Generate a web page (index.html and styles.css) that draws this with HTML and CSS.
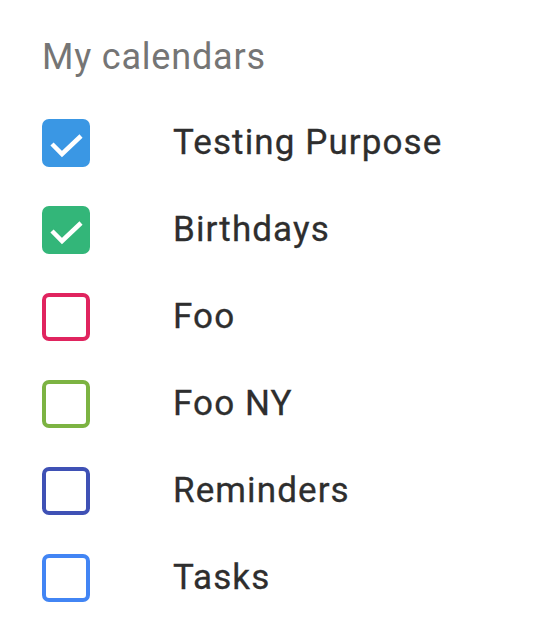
FILE: index.html
```html
<!DOCTYPE html>
<html>
<head>
<meta charset="utf-8">
<link rel="stylesheet" href="styles.css">
</head>
<body>
<div class="panel">
  <div class="title">My calendars</div>
  <ul class="list">
    <li class="row"><span class="box checked c-blue"><svg viewBox="0 0 48 48"><polyline points="10,25 20,35 39,17"/></svg></span><span class="label">Testing Purpose</span></li>
    <li class="row"><span class="box checked c-green"><svg viewBox="0 0 48 48"><polyline points="10,25 20,35 39,17"/></svg></span><span class="label">Birthdays</span></li>
    <li class="row"><span class="box c-pink"></span><span class="label">Foo</span></li>
    <li class="row"><span class="box c-lime"></span><span class="label">Foo NY</span></li>
    <li class="row"><span class="box c-indigo"></span><span class="label">Reminders</span></li>
    <li class="row"><span class="box c-sky"></span><span class="label">Tasks</span></li>
  </ul>
</div>
</body>
</html>
```
FILE: styles.css
```css
html, body {
  margin: 0;
  padding: 0;
  background: #ffffff;
}
body {
  font-family: Roboto, "Liberation Sans", sans-serif;
}
.panel {
  padding: 37px 0 0 42px;
}
.title {
  font-size: 36px;
  line-height: 40px;
  color: #757575;
  letter-spacing: 0.8px;
  margin-bottom: 22px;
}
.list {
  list-style: none;
  margin: 0;
  padding: 0;
}
.row {
  height: 87px;
  display: flex;
  align-items: center;
}
.box {
  box-sizing: border-box;
  width: 48px;
  height: 48px;
  border: 4px solid currentColor;
  border-radius: 7px;
  flex: none;
  display: flex;
  align-items: center;
  justify-content: center;
  margin-right: 83px;
}
.box.checked {
  background: currentColor;
  border: none;
}
.box svg {
  width: 48px;
  height: 48px;
  display: block;
}
.box polyline {
  fill: none;
  stroke: #ffffff;
  stroke-width: 4.5;
}
.label {
  font-size: 35px;
  color: #2e2e2e;
  letter-spacing: 1.1px;
  -webkit-text-stroke: 0.3px #2e2e2e;
}
.c-blue { color: #3a97e4; }
.c-green { color: #33b679; }
.c-pink { color: #e0245f; }
.c-lime { color: #7cb342; }
.c-indigo { color: #3f51b5; }
.c-sky { color: #4285f4; }
```
